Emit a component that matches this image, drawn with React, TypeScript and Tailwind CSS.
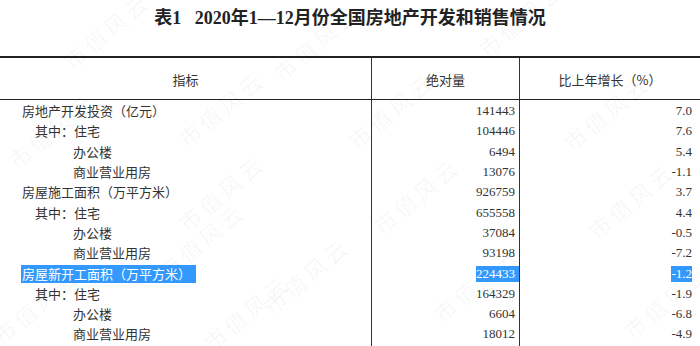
import React from "react";

type Row = { label: string; indent: 0 | 1 | 2; value: string; pct: string; hl?: boolean };

const rows: Row[] = [
  { label: "房地产开发投资（亿元）", indent: 0, value: "141443", pct: "7.0" },
  { label: "其中：住宅", indent: 1, value: "104446", pct: "7.6" },
  { label: "办公楼", indent: 2, value: "6494", pct: "5.4" },
  { label: "商业营业用房", indent: 2, value: "13076", pct: "-1.1" },
  { label: "房屋施工面积（万平方米）", indent: 0, value: "926759", pct: "3.7" },
  { label: "其中：住宅", indent: 1, value: "655558", pct: "4.4" },
  { label: "办公楼", indent: 2, value: "37084", pct: "-0.5" },
  { label: "商业营业用房", indent: 2, value: "93198", pct: "-7.2" },
  { label: "房屋新开工面积（万平方米）", indent: 0, value: "224433", pct: "-1.2", hl: true },
  { label: "其中：住宅", indent: 1, value: "164329", pct: "-1.9" },
  { label: "办公楼", indent: 2, value: "6604", pct: "-6.8" },
  { label: "商业营业用房", indent: 2, value: "18012", pct: "-4.9" },
];

const marks: [number, number][] = [
  [100, 30], [310, 42], [515, 18],
  [45, 130], [215, 108], [385, 110], [600, 112],
  [215, 192], [410, 195], [625, 200],
  [195, 240], [300, 275], [470, 283], [660, 300],
  [30, 305], [240, 312],
];

const cjk = { fontFamily: '"Noto Sans CJK SC", "Noto Sans", sans-serif' };
const num = { fontFamily: '"Liberation Serif", "Times New Roman", serif' };

export default function App() {
  return (
    <div className="relative w-[700px] h-[346px] overflow-hidden bg-white text-[#333]">
      <div
        className="h-[56px] pt-[6px] flex justify-center text-[18px] font-bold text-[#222] leading-[24px]"
        style={{ fontFamily: '"Liberation Serif", "Noto Sans CJK SC", serif' }}
      >
        <span>表1&nbsp;&nbsp;&nbsp;2020年1—12月份全国房地产开发和销售情况</span>
      </div>
      <div className="h-[2px] bg-[#222]" />
      <div className="flex h-[41px] text-[13px]" style={cjk}>
        <div className="w-[371px] flex items-center justify-center pt-[2px]">指标</div>
        <div className="w-[148px] border-l border-[#333] flex items-center justify-center pt-[2px]">绝对量</div>
        <div className="flex-1 border-l border-[#333] flex items-center justify-center pt-[2px]">比上年增长（%）</div>
      </div>
      <div className="h-[1px] bg-[#222]" />
      <div className="flex h-[300px]">
        <div className="w-[371px] pt-[1px]">
          {rows.map((r, i) => (
            <div key={i} className="h-[20.3px] flex items-center text-[13px] leading-[18px]" style={cjk}>
              <span
                className={
                  (r.indent === 0 ? "ml-[21px] pl-[1px] pr-[5px] " : r.indent === 1 ? "ml-[35px] " : "ml-[73px] ") +
                  (r.hl ? "bg-[#3399ff] text-white" : "")
                }
              >
                {r.label}
              </span>
            </div>
          ))}
        </div>
        <div className="w-[148px] border-l border-[#333] pt-[1px]">
          {rows.map((r, i) => (
            <div key={i} className="h-[20.3px] flex items-center justify-end text-[13px] leading-[16px]" style={num}>
              <span className={r.hl ? "bg-[#3399ff] text-white pr-[4px]" : "pr-[4px]"}>{r.value}</span>
            </div>
          ))}
        </div>
        <div className="flex-1 border-l border-[#333] pt-[1px]">
          {rows.map((r, i) => (
            <div key={i} className="h-[20.3px] flex items-center justify-end pr-[8px] text-[13px] leading-[16px]" style={num}>
              <span className={r.hl ? "bg-[#3399ff] text-white" : ""}>{r.pct}</span>
            </div>
          ))}
        </div>
      </div>
      <div className="pointer-events-none absolute inset-0">
        {marks.map(([x, y], i) => (
          <span
            key={i}
            className="absolute whitespace-nowrap text-[22px] leading-none text-[rgba(0,0,0,0.045)]"
            style={{ ...cjk, left: x - 46, top: y - 11, transform: "rotate(-40deg)", letterSpacing: "4px" }}
          >
            市值风云
          </span>
        ))}
      </div>
    </div>
  );
}
